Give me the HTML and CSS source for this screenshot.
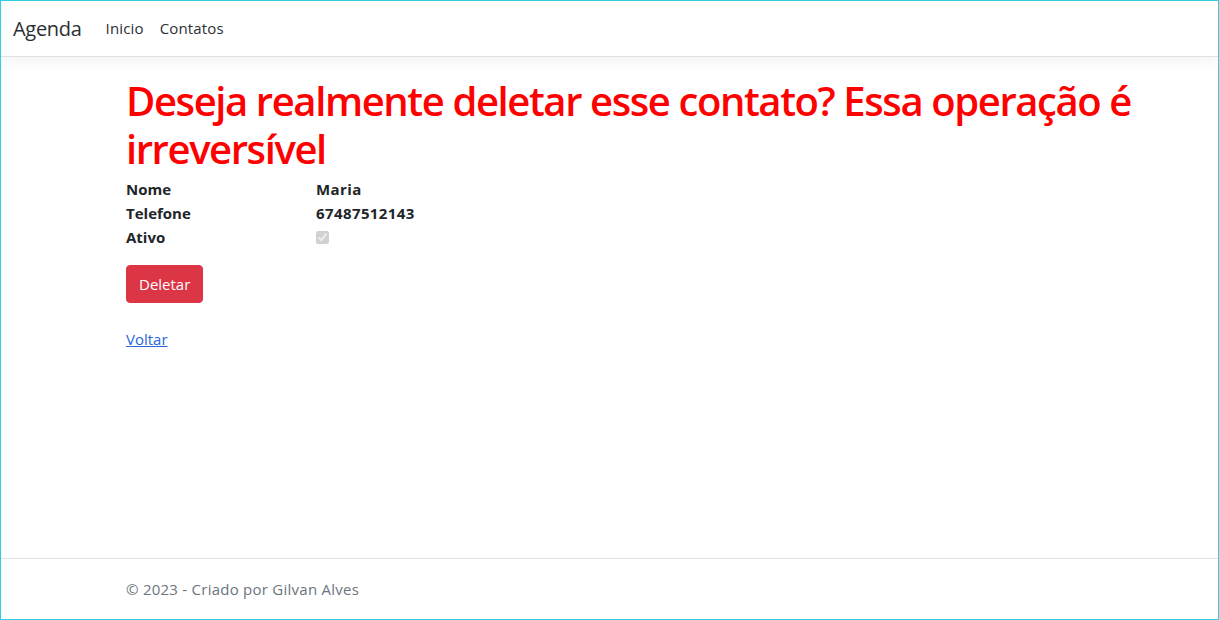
FILE: index.html
```html
<!DOCTYPE html>
<html lang="pt-br">
<head>
<meta charset="utf-8">
<title>Agenda</title>
<link rel="stylesheet" href="styles.css">
</head>
<body>
<div class="frame">
  <header class="navbar">
    <a class="brand" href="#">Agenda</a>
    <nav class="nav">
      <a class="nav-link" href="#">Inicio</a>
      <a class="nav-link" href="#">Contatos</a>
    </nav>
  </header>
  <main class="container main">
    <h1 class="title">Deseja realmente deletar esse contato? Essa operação é irreversível</h1>
    <dl class="details">
      <dt>Nome</dt><dd>Maria</dd>
      <dt>Telefone</dt><dd>67487512143</dd>
      <dt>Ativo</dt><dd><input class="check" type="checkbox" checked disabled></dd>
    </dl>
    <button class="btn-danger" type="button">Deletar</button>
    <a class="back" href="#">Voltar</a>
  </main>
  <footer class="footer">
    <div class="container">© 2023 - Criado por Gilvan Alves</div>
  </footer>
</div>
</body>
</html>
```
FILE: styles.css
```css
* { box-sizing: border-box; }
html, body { margin: 0; padding: 0; }
body {
  font-family: "Open Sans", "Noto Sans", sans-serif;
  font-size: 16px;
  line-height: 1.5;
  color: #212529;
  background: #fff;
}
.frame {
  height: 620px;
  border: 1px solid #2fd0e0;
  display: flex;
  flex-direction: column;
  overflow: hidden;
}
.navbar {
  height: 56px;
  flex: none;
  display: flex;
  align-items: center;
  padding: 0 12px;
  border-bottom: 1px solid #dee2e6;
  box-shadow: 0 4px 12px rgba(0,0,0,.05);
  background: #fff;
  position: relative;
  z-index: 1;
}
.brand {
  font-size: 20px;
  color: #2b2f33;
  text-decoration: none;
  margin-right: 16px;
  letter-spacing: -0.3px;
}
.nav { display: flex; }
.nav-link {
  padding: 0 8px;
  color: #2b2f33;
  text-decoration: none;
  font-size: 15px;
  letter-spacing: 0.15px;
}
.container { padding: 0 60px 0 125px; }
.main { flex: 1; padding-top: 20px; }
.title {
  margin: 0 0 4px;
  font-size: 40px;
  font-weight: 600;
  line-height: 1.2;
  color: #ff0000;
  letter-spacing: -1.4px;
}
.details {
  display: grid;
  grid-template-columns: 190px 1fr;
  margin: 0 0 16px;
  font-weight: 700;
  font-size: 15px;
  line-height: 24px;
}
.details dd { letter-spacing: 0.4px; }
.details dt, .details dd { margin: 0; }
.check {
  margin: 0;
  width: 13px;
  height: 13px;
  vertical-align: -1px;
}
.btn-danger {
  display: block;
  font-family: inherit;
  font-size: 15px;
  height: 38px;
  padding: 0 12px;
  color: #fff;
  background: #dc3545;
  border: 1px solid #dc3545;
  border-radius: 4px;
  margin-bottom: 24px;
}
.back {
  color: #2a66d9;
  font-size: 15px;
}
.footer {
  flex: none;
  height: 61px;
  border-top: 1px solid #dee2e6;
  line-height: 60px;
  color: #6c757d;
  font-size: 15px;
  letter-spacing: 0.25px;
}
```
